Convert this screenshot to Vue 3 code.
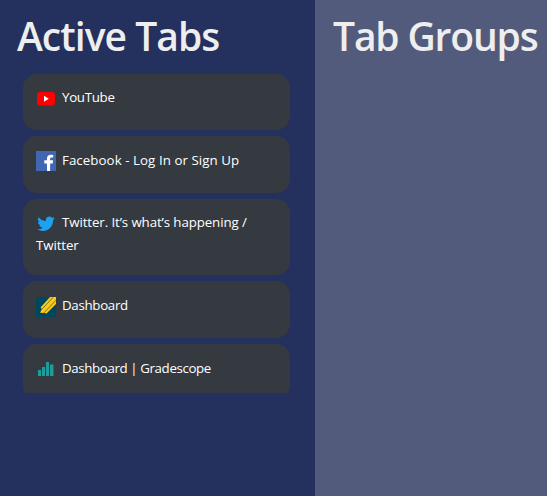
<script setup>
const tabs = [
  { icon: 'youtube', title: 'YouTube' },
  { icon: 'facebook', title: 'Facebook - Log In or Sign Up' },
  { icon: 'twitter', title: 'Twitter. It’s what’s happening / Twitter', tall: true },
  { icon: 'stripes', title: 'Dashboard' },
  { icon: 'bars', title: 'Dashboard | Gradescope' },
]
</script>

<template>
  <main class="page">
    <section class="active">
      <h1 class="active-title">Active Tabs</h1>
      <ul class="list">
        <li v-for="(tab, i) in tabs" :key="i" class="card" :class="[tab.icon, { tall: tab.tall }]">
          <svg class="icon" viewBox="0 0 20 20">
            <template v-if="tab.icon === 'youtube'">
              <rect x="1" y="4" width="18" height="13.5" rx="3" fill="#f00" />
              <path d="M8 7.7v6l4.8-3z" fill="#fff" />
            </template>
            <template v-else-if="tab.icon === 'facebook'">
              <path d="M0 0h20v20H0z" fill="#4267b2" />
              <path d="M11 20v-7.5H8.3V9.3H11V7.5c0-2.6 1.6-3.7 3.9-3.7l2.3.1v2.6h-1.6c-1.3 0-1.5.6-1.5 1.3v1.5h3l-.4 3.2h-2.6V20z" fill="#fff" />
            </template>
            <path
              v-else-if="tab.icon === 'twitter'"
              transform="translate(1.3 2) scale(.73)"
              d="M23.95 4.57a10 10 0 0 1-2.82.77 4.96 4.96 0 0 0 2.16-2.72c-.95.55-2 .96-3.13 1.18a4.92 4.92 0 0 0-8.38 4.48C7.69 8.1 4.07 6.13 1.64 3.16a4.93 4.93 0 0 0 1.52 6.57 4.9 4.9 0 0 1-2.23-.61v.06a4.92 4.92 0 0 0 3.95 4.83 5 5 0 0 1-2.21.08 4.94 4.94 0 0 0 4.6 3.42A9.87 9.87 0 0 1 0 19.54a14 14 0 0 0 7.55 2.21c9.05 0 14-7.5 14-13.98l-.02-.64a9.9 9.9 0 0 0 2.42-2.56z"
              fill="#1da1f2"
            />
            <template v-else-if="tab.icon === 'stripes'">
              <path d="M0 0h20v20H0z" fill="#00465c" />
              <path d="M4.5 10.5 14 0H20v7L10.5 16.6 8.5 16 4 15.8 6 12z" fill="#fdc913" />
              <path d="M6 12.2 17 .4M8 15.8 20 3.2" fill="none" stroke="#6b6b35" stroke-width=".9" />
            </template>
            <path v-else d="M2 12h3v6H2zM6 9h3v9H6zM10 4h3v14h-3zM14 6.5h3.5V18H14z" fill="#1e9c9c" />
          </svg>
          <span class="label">{{ tab.title }}</span>
        </li>
      </ul>
    </section>
    <section class="groups">
      <h1 class="groups-title">Tab Groups</h1>
    </section>
  </main>
</template>

<style>
body {
  margin: 0;
}
</style>

<style scoped>
.page {
  display: flex;
  width: 547px;
  height: 496px;
  overflow: hidden;
  background: #24305e;
  font-family: "Open Sans", "Noto Sans", sans-serif;
}
.active {
  width: 315px;
  flex: none;
}
.groups {
  flex: 1;
  background: #535b7d;
}
h1 {
  margin: 0;
  padding-top: 12px;
  height: 62px;
  box-sizing: border-box;
  font-size: 39px;
  line-height: 48px;
  font-weight: 600;
  color: #eee;
  white-space: nowrap;
}
.active-title {
  padding-left: 17px;
  letter-spacing: -0.95px;
}
.groups-title {
  padding-left: 18px;
  letter-spacing: -1.15px;
}
.list {
  display: flex;
  flex-direction: column;
  gap: 6px;
  height: 331px;
  margin: 0;
  padding: 12px 25px 0 23px;
  box-sizing: border-box;
  overflow: hidden;
  list-style: none;
}
.card {
  flex: none;
  height: 56px;
  box-sizing: border-box;
  padding: 12px 13px;
  border-radius: 14px;
  background: #343a40;
  color: #fff;
  font-size: 13.3px;
  line-height: 23px;
}
.card.facebook,
.card.stripes {
  height: 57px;
}
.card.facebook,
.card.stripes,
.card.bars {
  padding-top: 13px;
}
.card.tall {
  height: 76px;
}
.icon {
  display: inline-block;
  width: 20px;
  height: 20px;
  margin: 2px 6px -2px 0;
  vertical-align: top;
}
.bars .icon {
  margin-top: 1px;
}
.stripes .icon {
  margin-top: 3px;
  margin-bottom: -3px;
}
.label {
  letter-spacing: -0.3px;
}
.facebook .label {
  letter-spacing: 0.06px;
}
.twitter .label {
  letter-spacing: -0.1px;
}
.bars .label {
  letter-spacing: -0.38px;
}
</style>
